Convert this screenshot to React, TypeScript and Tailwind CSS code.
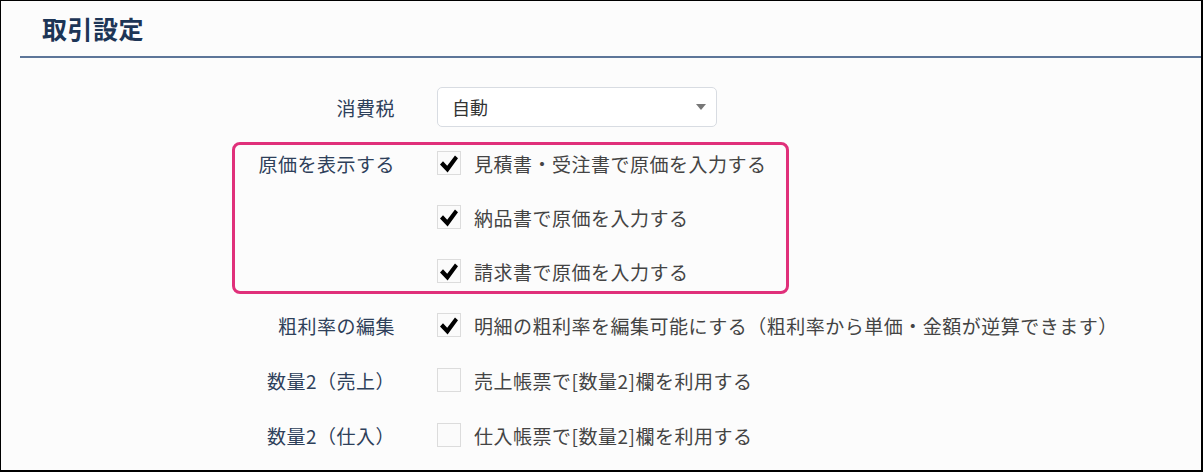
const font = { fontFamily: '"Noto Sans CJK JP", "Noto Sans", sans-serif' };

function Checkbox({ checked }: { checked: boolean }) {
  return (
    <div className="w-[24px] h-[24px] shrink-0 border border-[#dcdcdc] bg-[#fbfbfb] flex items-center justify-center">
      {checked && (
        <svg width="18" height="18" viewBox="0 0 18 18" className="mt-[1px]">
          <path d="M0 9.5 L3 6.3 L7.2 10.8 L15 0.5 L18 3.2 L7.6 17.5 Z" fill="#000" />
        </svg>
      )}
    </div>
  );
}

function Option({ checked, text }: { checked: boolean; text: string }) {
  return (
    <div className="flex items-center h-[24px] gap-[13px]">
      <Checkbox checked={checked} />
      <span className="text-[19px] tracking-[0.5px] text-[#444] leading-none whitespace-nowrap">{text}</span>
    </div>
  );
}

function Row({ label, labelWidth, children }: { label: string; labelWidth: string; children: React.ReactNode }) {
  return (
    <div className="flex items-start gap-[42px]">
      <div className={`${labelWidth} shrink-0 h-[24px] flex items-center justify-end text-[19px] tracking-[0.5px] text-[#2e405a] leading-none whitespace-nowrap`}>
        {label}
      </div>
      {children}
    </div>
  );
}

export default function App() {
  return (
    <div
      className="w-[1203px] h-[472px] bg-[#fcfcfc] border-l border-t border-r-2 border-b-2 border-black overflow-hidden"
      style={font}
    >
      {/* Header */}
      <div className="pl-[19px]">
        <div className="h-[55px] flex items-center pl-[22px]">
          <h1 className="text-[25px] font-bold text-[#1d3556] tracking-[0.5px] leading-none">取引設定</h1>
        </div>
        <div className="h-[2px] bg-[#5d7699]" />
      </div>

      {/* Form */}
      <div className="pt-[29px] flex flex-col">
        <div className="flex items-center gap-[42px]">
          <div className="w-[394px] text-right text-[19px] tracking-[0.5px] text-[#2e405a] leading-none">消費税</div>
          <div className="w-[280px] h-[40px] bg-white border border-[#d8dce2] rounded-[5px] flex items-center justify-between pl-[14px] pr-[10px]">
            <span className="text-[18px] text-[#333] leading-none">自動</span>
            <svg width="10" height="6" viewBox="0 0 10 6">
              <path d="M0 0 L10 0 L5 6 Z" fill="#777" />
            </svg>
          </div>
        </div>

        {/* Highlighted group */}
        <div className="mt-[15px] ml-[231px] w-[557px] border-[3px] border-[#e0307a] rounded-[8px] pt-[6px] pb-[8px]">
          <Row label="原価を表示する" labelWidth="w-[160px]">
            <div className="flex flex-col gap-[30px]">
              <Option checked text="見積書・受注書で原価を入力する" />
              <Option checked text="納品書で原価を入力する" />
              <Option checked text="請求書で原価を入力する" />
            </div>
          </Row>
        </div>

        <div className="mt-[19px] flex flex-col gap-[31px]">
          <Row label="粗利率の編集" labelWidth="w-[394px]">
            <Option checked text="明細の粗利率を編集可能にする（粗利率から単価・金額が逆算できます）" />
          </Row>
          <Row label="数量2（売上）" labelWidth="w-[394px]">
            <Option checked={false} text="売上帳票で[数量2]欄を利用する" />
          </Row>
          <Row label="数量2（仕入）" labelWidth="w-[394px]">
            <Option checked={false} text="仕入帳票で[数量2]欄を利用する" />
          </Row>
        </div>
      </div>
    </div>
  );
}
